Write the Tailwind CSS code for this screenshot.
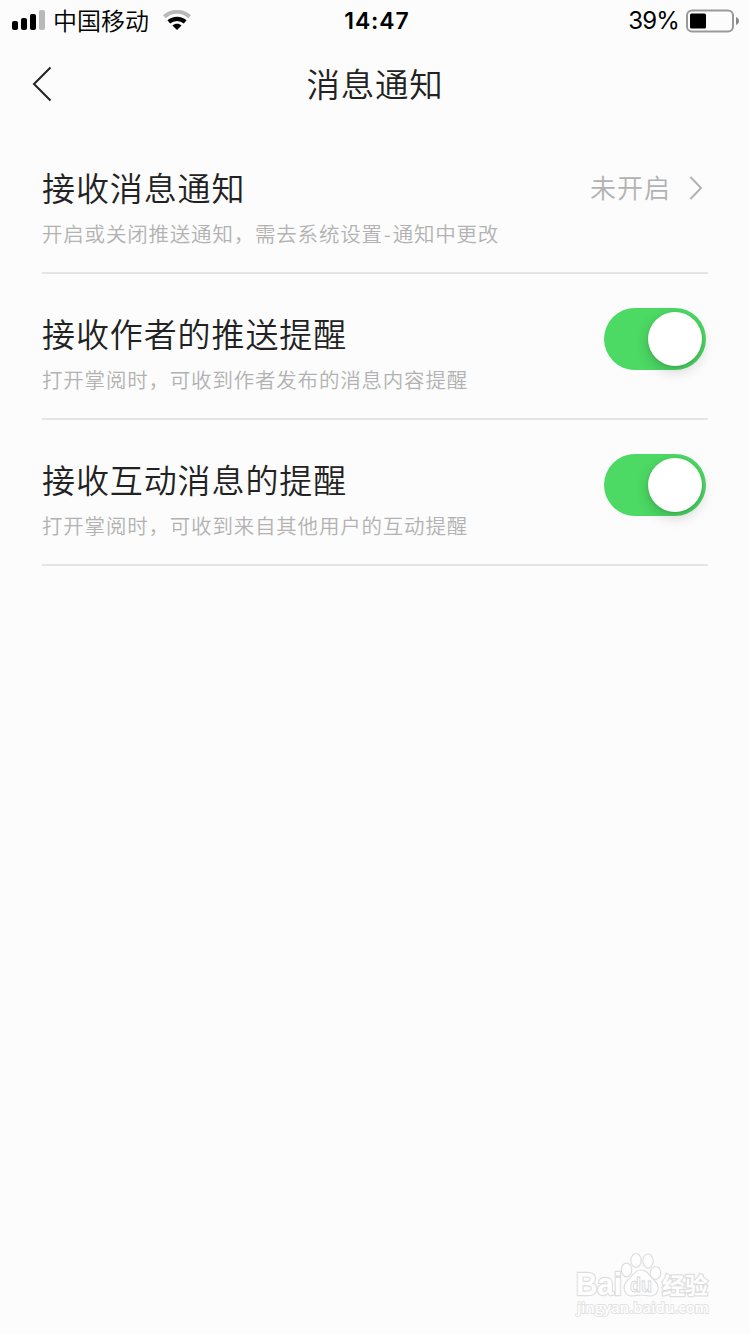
<!DOCTYPE html>
<html lang="zh-CN">
<head>
  <meta charset="UTF-8" />
  <meta name="viewport" content="width=device-width, initial-scale=1.0" />
  <title>消息通知</title>
  <script src="https://cdn.jsdelivr.net/npm/@tailwindcss/browser@4"></script>
</head>
<body class="relative flex flex-col h-[1334px] overflow-hidden bg-[#fcfcfc] text-[#222] font-['Liberation_Sans','Noto_Sans_CJK_SC',sans-serif]">
  <!-- Status bar -->
  <header class="grid grid-cols-3 items-center h-10 pl-3 pr-[10px] text-black text-2xl leading-8">
    <div class="flex items-center">
      <svg class="w-[34px] h-[22px]" viewBox="0 0 34 22">
        <rect x="0" y="12" width="6" height="9" rx="2" />
        <rect x="9" y="9" width="6" height="12" rx="2" />
        <rect x="18" y="5" width="6" height="16" rx="2" />
        <rect x="27" y="1" width="6" height="20" rx="2" fill="#b9b9b9" />
      </svg>
      <span class="ml-[7px] whitespace-nowrap font-[350] font-['Noto_Sans_CJK_SC',sans-serif]">中国移动</span>
      <svg class="ml-3.5 w-[28px] h-[20px]" viewBox="0 0 28 20">
        <path d="M1.4 6.8C8.5.2 19.5.2 26.6 6.8" fill="none" stroke="#b9b9b9" stroke-width="4" />
        <path d="M5.8 11.8C10.5 7.8 17.5 7.8 22.2 11.8" fill="none" stroke="#000" stroke-width="4.2" />
        <path d="M9.4 15.6C12 13.2 16 13.2 18.6 15.6L14 20Z" />
      </svg>
    </div>
    <div class="text-center font-semibold font-['Inter',sans-serif] text-[23px] tracking-[0.9px] pl-0.5 pt-0.5">14:47</div>
    <div class="flex items-center justify-end">
      <span class="font-['Inter',sans-serif] text-[24px] tracking-[-0.8px] mr-[7px] pt-0.5">39%</span>
      <svg class="mt-px w-[54px] h-6" viewBox="0 0 54 24">
        <rect x="1" y="1.5" width="46" height="21" rx="5" fill="none" stroke="#999" stroke-width="2" />
        <rect x="4" y="4.5" width="16" height="15" rx="1.5" />
        <path d="M50 8C54 9.5 54 14.5 50 16Z" fill="#888" />
      </svg>
    </div>
  </header>

  <nav class="grid grid-cols-[1fr_auto_1fr] items-center h-[88px] px-8">
    <svg class="w-5 h-9" viewBox="0 0 20 36" fill="none" stroke="#222" stroke-width="2">
      <path d="M18.5 1.5L2 18L18.5 34.5" />
    </svg>
    <h1 class="pb-0.5 text-[33.5px] tracking-[0.7px] font-[350] font-['Noto_Sans_CJK_SC',sans-serif]">消息通知</h1>
  </nav>

  <main class="px-[42px] font-[350] font-['Noto_Sans_CJK_SC',sans-serif]">
    <section class="flex justify-between h-[146px] border-b-2 border-[#e5e5e5] whitespace-nowrap">
      <div class="pt-[35px]">
        <h2 class="text-[33px] leading-[48px] tracking-[0.9px]">接收消息通知</h2>
        <p class="mt-[7px] text-[20.5px] leading-[30px] tracking-[0.8px] text-[#b2b2b2]">开启或关闭推送通知，需去系统设置<span class="px-px">-</span>通知中更改</p>
      </div>
      <div class="flex items-center h-10 mt-10 pr-[5px] text-[26px] tracking-[1px] text-[#b2b2b2]">
        <span class="pb-1">未开启</span>
        <svg class="ml-[18px] w-[14px] h-6" viewBox="0 0 14 24" fill="none" stroke="#b2b2b2" stroke-width="2">
          <path d="M1.5 1L12 12L1.5 23" />
        </svg>
      </div>
    </section>

    <section class="flex justify-between h-[146px] border-b-2 border-[#e5e5e5] whitespace-nowrap">
      <div class="pt-[35px]">
        <h2 class="text-[33px] leading-[48px] tracking-[0.9px]">接收作者的推送提醒</h2>
        <p class="mt-[7px] text-[20.5px] leading-[30px] tracking-[0.8px] text-[#b2b2b2]">打开掌阅时，可收到作者发布的消息内容提醒</p>
      </div>
      <div class="flex justify-end items-center w-[102px] h-[62px] mt-[34px] mr-[2px] pr-1 rounded-full bg-[#4cd964]">
        <div class="size-[54px] rounded-full bg-white shadow-[0_5px_14px_rgba(0,0,0,0.18),0_1px_3px_rgba(0,0,0,0.12)]"></div>
      </div>
    </section>

    <section class="flex justify-between h-[146px] border-b-2 border-[#e5e5e5] whitespace-nowrap">
      <div class="pt-[35px]">
        <h2 class="text-[33px] leading-[48px] tracking-[0.9px]">接收互动消息的提醒</h2>
        <p class="mt-[7px] text-[20.5px] leading-[30px] tracking-[0.8px] text-[#b2b2b2]">打开掌阅时，可收到来自其他用户的互动提醒</p>
      </div>
      <div class="flex justify-end items-center w-[102px] h-[62px] mt-[34px] mr-[2px] pr-1 rounded-full bg-[#4cd964]">
        <div class="size-[54px] rounded-full bg-white shadow-[0_5px_14px_rgba(0,0,0,0.18),0_1px_3px_rgba(0,0,0,0.12)]"></div>
      </div>
    </section>
  </main>

  <!-- Watermark -->
  <svg class="absolute left-[570px] top-[1248px] w-[150px] h-[76px]" viewBox="0 0 150 76" fill="#fefefe" stroke="#dedede" stroke-width="1.2">
    <g font-weight="700" paint-order="stroke">
      <text x="6" y="47" font-size="31" stroke-width="2.4" textLength="46" lengthAdjust="spacingAndGlyphs" font-family="Liberation Sans, sans-serif">Bai</text>
      <text x="92" y="45.5" font-size="23" stroke-width="2.4" textLength="46" lengthAdjust="spacingAndGlyphs" font-family="Noto Sans CJK SC, sans-serif">经验</text>
      <text x="7" y="65" font-size="15" stroke-width="1.8" stroke="#e2e2e2" textLength="132" lengthAdjust="spacingAndGlyphs" font-family="Open Sans, sans-serif" font-weight="600">jingyan.baidu.com</text>
    </g>
    <ellipse cx="56.5" cy="22" rx="5.2" ry="6.8" />
    <ellipse cx="66" cy="12.5" rx="5.2" ry="7" />
    <ellipse cx="78" cy="13" rx="5.2" ry="7" />
    <ellipse cx="85.5" cy="25" rx="5.2" ry="6.5" />
    <path d="M71 22C64 22 63 28 58 32C52 37 53 47 61 48C66 48 67 47 71 47C75 47 77 48 81 48C89 47 90 38 85 33C79 28 78 22 71 22Z" />
    <text x="60" y="44" font-size="20" font-weight="700" font-family="Liberation Sans, sans-serif" fill="#fcfcfc" stroke="#d8d8d8" stroke-width="0.9" textLength="22" lengthAdjust="spacingAndGlyphs">du</text>
  </svg>
</body>
</html>
